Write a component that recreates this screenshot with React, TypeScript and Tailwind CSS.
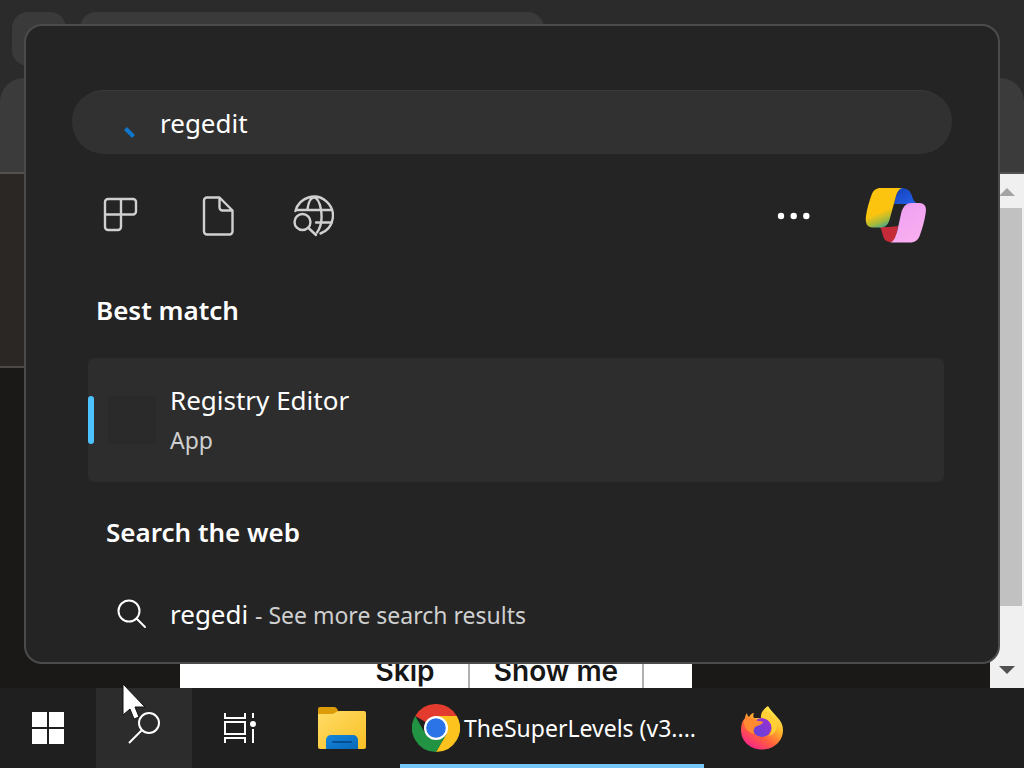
import React from 'react';

interface IconProps {
  className?: string;
}

const AppsIcon: React.FC<IconProps> = ({ className }) => (
  <svg viewBox="0 0 40 40" className={className} fill="none" stroke="currentColor" strokeWidth="2.400">
    <path d="M8 3h25a3 3 0 0 1 3 3v9.500a3 3 0 0 1-3 3H21V31a3 3 0 0 1-3 3H8a3 3 0 0 1-3-3V6a3 3 0 0 1 3-3zM21 3v16M5 18.500h16" />
  </svg>
);

const DocumentIcon: React.FC<IconProps> = ({ className }) => (
  <svg viewBox="0 0 40 40" className={className} fill="none" stroke="currentColor" strokeWidth="2.400" strokeLinejoin="round">
    <path d="M11 1.500h12.500L36.500 14.500V35.500a3 3 0 0 1-3 3H11a3 3 0 0 1-3-3V4.500a3 3 0 0 1 3-3zM23.500 1.500v10a3 3 0 0 0 3 3h10" />
  </svg>
);

const WebIcon: React.FC<IconProps> = ({ className }) => (
  <svg viewBox="0 0 44 44" className={className} fill="none" stroke="currentColor" strokeWidth="2.400" strokeLinecap="round">
    <path d="M5.500 17A19 19 0 1 1 30.500 39.500M7 16h35M26 28.500h16M17.500 15C18.500 8 20.500 3.500 24 3.500s5.500 4.500 7 12c1.200 8 .6 17-4 23" />
    <circle cx="12.500" cy="28" r="8" />
    <path d="M18.500 34l7.500 7" />
  </svg>
);

const MoreIcon: React.FC<IconProps> = ({ className }) => (
  <svg viewBox="0 0 40 40" className={className} fill="currentColor">
    <circle cx="9" cy="20" r="3.200" />
    <circle cx="21.700" cy="20" r="3.200" />
    <circle cx="34.300" cy="20" r="3.200" />
  </svg>
);

const CopilotIcon: React.FC<IconProps> = ({ className }) => (
  <svg viewBox="0 0 64 64" className={className}>
    <defs>
      <linearGradient id="copilot-yellow" x1="9" y1="8" x2="24" y2="44" gradientUnits="userSpaceOnUse">
        <stop offset="0.550" stopColor="#fcc40e" />
        <stop offset="0.780" stopColor="#a5b93d" />
        <stop offset="1" stopColor="#27a3a0" />
      </linearGradient>
      <linearGradient id="copilot-blue" x1="0" y1="0" x2="1" y2="1">
        <stop offset="0" stopColor="#1740b8" />
        <stop offset="1" stopColor="#2464ee" />
      </linearGradient>
      <linearGradient id="copilot-pink" x1="0" y1="0" x2="0.400" y2="1">
        <stop offset="0" stopColor="#b76ae0" />
        <stop offset="0.250" stopColor="#f0a2f2" />
        <stop offset="1" stopColor="#f8aef0" />
      </linearGradient>
    </defs>
    <path d="M36 4C43 4 46 6 48 12C49.500 17 51 19 55 20H30L32 12Z" fill="url(#copilot-blue)" />
    <path d="M15 42.500C19 43 22 43 26 43L34 42L31 58H27C22 58 20 56 18.500 50C17.500 46 17 44 15 42.500Z" fill="#c52a38" />
    <path d="M17 4H38C35 5 33 8 32 12L26 34C24.500 40 22 43.500 17 43.500H9C3 43.500 1 39 2 32C3 25 5 18 7.500 11C9.500 6 12 4 17 4Z" fill="url(#copilot-yellow)" />
    <path d="M26 58.500C30 57.500 31.500 53 33 48L37 30C38.500 24 41 19 47 19H55C61 19 63 23 61.500 30C60.500 37 58.500 44 56 51C54 56.500 51 58.500 46 58.500Z" fill="url(#copilot-pink)" />
  </svg>
);

const SearchIcon: React.FC<IconProps> = ({ className }) => (
  <svg viewBox="0 0 32 32" className={className} fill="none" stroke="currentColor" strokeWidth="2" strokeLinecap="round">
    <circle cx="13" cy="13" r="10.500" />
    <path d="M20.500 20.500l8.500 8.500" />
  </svg>
);

const StartIcon: React.FC<IconProps> = ({ className }) => (
  <svg viewBox="0 0 32 32" className={className} fill="#ffffff">
    <path d="M0 0h15v15H0zM17 0h15v15H17zM0 17h15v15H0zM17 17h15v15H17z" />
  </svg>
);

const TaskbarSearchIcon: React.FC<IconProps> = ({ className }) => (
  <svg viewBox="0 0 32 32" className={className} fill="none" stroke="currentColor" strokeWidth="2">
    <circle cx="21" cy="11" r="10" />
    <path d="M13.500 18.500L1 31" />
  </svg>
);

const TaskViewIcon: React.FC<IconProps> = ({ className }) => (
  <svg viewBox="0 0 32 32" className={className} fill="none" stroke="currentColor" strokeWidth="2">
    <path d="M1 1v5h20V1M1 31v-5h20v5M1 10h20v12H1zM29 1v5M29 17v14" />
    <circle cx="29" cy="12" r="3" fill="currentColor" stroke="none" />
  </svg>
);

const FolderIcon: React.FC<IconProps> = ({ className }) => (
  <svg viewBox="0 0 52 44" className={className}>
    <defs>
      <linearGradient id="folder-front" x1="0" y1="0" x2="1" y2="1">
        <stop offset="0" stopColor="#ffdc66" />
        <stop offset="1" stopColor="#f9bf24" />
      </linearGradient>
      <linearGradient id="folder-blue" x1="0" y1="0" x2="1" y2="1">
        <stop offset="0" stopColor="#1587dc" />
        <stop offset="1" stopColor="#0768b8" />
      </linearGradient>
    </defs>
    <path d="M2 1h14c2 0 3 1 4 4v6H0V3a2 2 0 0 1 2-2z" fill="#dc9c0a" />
    <path d="M0 8h14c3 0 4-3 7-3h25a2 2 0 0 1 2 2v34a2 2 0 0 1-2 2H2a2 2 0 0 1-2-2z" fill="url(#folder-front)" />
    <path d="M8 43V34a5 5 0 0 1 5-5h22a5 5 0 0 1 5 5v9z" fill="url(#folder-blue)" />
    <path d="M15 36h18" stroke="#064e91" strokeWidth="2" strokeLinecap="round" />
  </svg>
);

const ChromeIcon: React.FC<IconProps> = ({ className }) => (
  <svg viewBox="0 0 48 48" className={className}>
    <path d="M24 24L3.200 12A24 24 0 0 1 44.800 12z" fill="#e33b2e" />
    <path d="M24 12h20.800A24 24 0 0 1 24 48l10.400-18z" fill="#fcc31e" />
    <path d="M3.200 12L13.600 30 24 36l10.400-6L24 48A24 24 0 0 1 3.200 12z" fill="#229342" />
    <circle cx="24" cy="24" r="12" fill="#ffffff" />
    <circle cx="24" cy="24" r="9.800" fill="#2a74e8" />
  </svg>
);

const FirefoxIcon: React.FC<IconProps> = ({ className }) => (
  <svg viewBox="0 0 48 48" className={className}>
    <defs>
      <linearGradient id="fox-body" x1="40" y1="6" x2="14" y2="44" gradientUnits="userSpaceOnUse">
        <stop offset="0" stopColor="#fff14f" />
        <stop offset="0.350" stopColor="#ffb52b" />
        <stop offset="0.650" stopColor="#ff603b" />
        <stop offset="1" stopColor="#f7238b" />
      </linearGradient>
      <linearGradient id="fox-globe" x1="0" y1="1" x2="1" y2="0">
        <stop offset="0" stopColor="#5a47dc" />
        <stop offset="1" stopColor="#a12bd0" />
      </linearGradient>
    </defs>
    <path d="M32 2c2 4 6 7 9 11c4 4 6 8 6 13c0 11-9 19.500-21 19.500S5 37 5 26c0-5 1-9 4-12c0-2 1-4 2-5c0 2 1 3 2 4c1-2 3-4 5-4c-1 2-1 3 0 5h7c-1-5 3-9 7-12z" fill="url(#fox-body)" />
    <circle cx="26" cy="23.500" r="9.500" fill="url(#fox-globe)" />
    <path d="M8 16c5-3 10-2 14 1c2 0 4 0 5 1c-1 3-4 3-6 4c-3 1-4 4-3 8c-7-2-11-8-10-14z" fill="#ff8a32" />
    <path d="M25 14c6 0 10 4 11 10c0 3-1 6-3 8c5-2 8-6 8-11c-1-6-6-9-9-14c-4 1-6 4-7 7z" fill="#ffcf35" />
  </svg>
);

const filters = [
  { label: 'Apps', icon: <AppsIcon className="h-10 w-10" /> },
  { label: 'Documents', icon: <DocumentIcon className="h-10 w-10" /> },
  { label: 'Web', icon: <WebIcon className="h-11 w-11" /> },
];

const BrowserWindow: React.FC = () => (
  <div className="flex flex-1 flex-col bg-[#2b2b2b]">
    <div className="flex h-[78px] items-start gap-[14px] px-3 pt-3">
      <div className="h-[54px] w-[54px] rounded-2xl bg-[#3a3a3a]" />
      <div className="flex h-14 w-[464px] rounded-t-2xl bg-[#3a3a3a] px-4 pt-3">
        <div className="h-8 w-8 bg-[#3f62b5]" />
      </div>
    </div>
    <div className="h-24 rounded-t-3xl border-b-2 border-[#525252] bg-[#3b3b3b]" />
    <div className="flex flex-1">
      <div className="flex flex-1 flex-col justify-between bg-[#1b1917]">
        <div className="h-[194px] border-b-2 border-[#4c4a49] bg-[#2a2725]" />
        <div className="ml-[180px] flex h-16 w-[512px] bg-white font-['Inter',sans-serif] text-[28px] leading-8 font-semibold text-[#161616]">
          <div className="w-[162px]" />
          <button type="button" className="flex flex-1 items-end justify-center border-r-2 border-[#b0b0b0] pb-px">Skip</button>
          <button type="button" className="flex w-[174px] items-end justify-center border-r-2 border-[#b0b0b0] pb-px">Show me</button>
          <div className="w-12" />
        </div>
      </div>
      <div className="flex w-[34px] flex-col bg-[#f0f0f0]">
        <svg viewBox="0 0 34 34" className="h-[34px] w-[34px]"><path d="M9 22l8-8 8 8z" fill="#a3a3a3" /></svg>
        <div className="mx-[2px] flex-1 bg-[#c1c1c1]" />
        <svg viewBox="0 0 34 82" className="h-[82px] w-[34px]"><path d="M9 60h16l-8 8z" fill="#505050" /></svg>
      </div>
    </div>
  </div>
);

const SearchPanel: React.FC = () => (
  <section className="absolute inset-6 flex flex-col overflow-hidden rounded-[18px] border-2 border-[#4b4b4b] bg-[#242424] px-[46px] pt-16">
    <label className="flex h-16 shrink-0 items-center rounded-full border-t border-[#3a3a3a] bg-[#313131] pr-8 pl-12">
      <svg viewBox="0 0 40 40" className="h-10 w-10">
        <path d="M5.500 25.500l8 8" stroke="#0f78cd" strokeWidth="4" />
      </svg>
      <input
        type="text"
        defaultValue="regedit"
        aria-label="Search"
        className="h-full min-w-0 flex-1 bg-transparent text-[26px] text-white outline-none"
      />
    </label>

    <nav className="mt-6 flex h-[76px] shrink-0 items-center pr-2 text-[#d0d0d0]">
      {filters.map((f) => (
        <button key={f.label} type="button" aria-label={f.label} className="flex h-full w-24 items-center justify-center">
          {f.icon}
        </button>
      ))}
      <button type="button" aria-label="More options" className="ml-auto flex h-full w-24 items-center justify-center text-white">
        <MoreIcon className="h-10 w-10" />
      </button>
      <button type="button" aria-label="Copilot" className="ml-2 flex h-full w-24 items-center justify-center">
        <CopilotIcon className="h-16 w-16" />
      </button>
    </nav>

    <h2 className="mt-9 pl-6 text-[26px] leading-10 font-semibold text-white">Best match</h2>
    <button type="button" className="mt-7 mr-2 ml-4 flex h-[124px] shrink-0 items-center rounded-md bg-[#2d2d2d] text-left">
      <span className="h-12 w-[6px] rounded-full bg-[#4cc2ff]" />
      <span className="ml-[14px] h-12 w-12 bg-[#2a2a2a]" />
      <span className="ml-[14px] flex flex-col">
        <span className="text-[26px] leading-10 text-white">Registry Editor</span>
        <span className="text-[23px] leading-10 text-[#cfcfcf]">App</span>
      </span>
    </button>

    <h2 className="mt-[30px] pl-[34px] text-[26px] leading-10 font-semibold text-white">Search the web</h2>
    <button type="button" className="mt-[30px] mr-2 ml-4 flex h-16 shrink-0 items-center pl-7 text-left text-white">
      <SearchIcon className="h-8 w-8" />
      <span className="ml-[22px] text-[26px] leading-10">
        regedi <span className="text-[23px] text-[#cfcfcf]">- See more search results</span>
      </span>
    </button>
  </section>
);

const Taskbar: React.FC = () => (
  <footer className="flex h-20 bg-[#1f1f1f] text-white">
    <button type="button" aria-label="Start" className="flex w-24 items-center justify-center">
      <StartIcon className="h-8 w-8" />
    </button>
    <button type="button" aria-label="Search" className="flex w-24 items-center justify-center bg-[#2c2c2c]">
      <TaskbarSearchIcon className="h-8 w-8" />
    </button>
    <button type="button" aria-label="Task view" className="flex w-24 items-center justify-center">
      <TaskViewIcon className="h-8 w-8" />
    </button>
    <button type="button" aria-label="File Explorer" className="flex w-28 items-center justify-center">
      <FolderIcon className="h-11 w-[52px]" />
    </button>
    <button type="button" className="flex w-[304px] items-center gap-1 border-b-4 border-[#76c6f7] pt-1 pl-3">
      <ChromeIcon className="h-12 w-12 shrink-0" />
      <span className="text-[23px] leading-8 whitespace-nowrap">TheSuperLevels (v3....</span>
    </button>
    <button type="button" aria-label="Firefox" className="flex w-28 items-center justify-center">
      <FirefoxIcon className="h-12 w-12" />
    </button>
  </footer>
);

const App: React.FC = () => {
  return (
    <div className="relative flex min-h-screen flex-col overflow-hidden bg-[#1b1917] font-['Noto_Sans',sans-serif]">
      <main className="relative flex flex-1 flex-col">
        <BrowserWindow />
        <SearchPanel />
      </main>
      <Taskbar />
      <svg viewBox="0 0 26 40" className="pointer-events-none absolute bottom-[45px] left-[122px] h-10 w-[26px]">
        <path d="M1 1v31l7-6 4 10 5-2-4-10h10z" fill="#ffffff" stroke="#111111" strokeWidth="1" />
      </svg>
    </div>
  );
};

export default App;
